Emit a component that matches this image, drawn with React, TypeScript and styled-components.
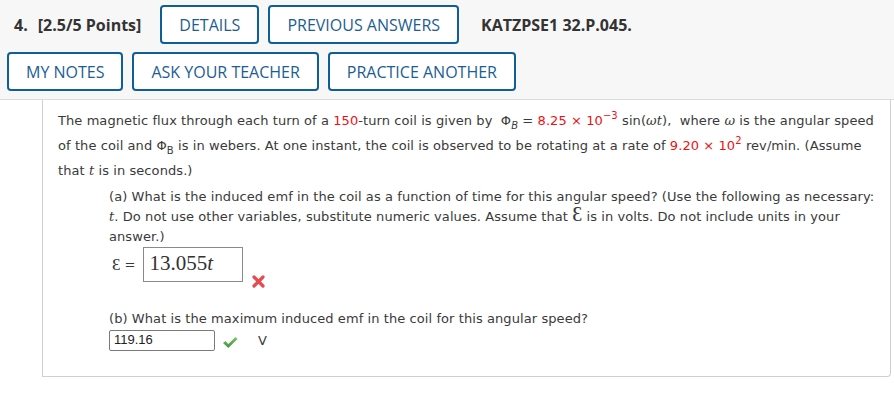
import React from "react";
import styled, { createGlobalStyle } from "styled-components";

const Global = createGlobalStyle`
  html, body { margin: 0; padding: 0; background: #ffffff; }
  body { width: 894px; height: 420px; overflow: hidden; }
`;

const Page = styled.div`
  width: 894px;
  height: 420px;
  background: #ffffff;
`;

const Header = styled.header`
  background: #f7f7f7;
  border-bottom: 1px solid #dcdcdc;
  padding: 5px 0 8px 0;
  display: flex;
  flex-direction: column;
  gap: 8px;
  font-family: "Open Sans", sans-serif;
`;

const Row = styled.div<{ $indent: number }>`
  display: flex;
  align-items: center;
  gap: 9px;
  padding-left: ${(p) => p.$indent}px;
`;

const Num = styled.span`
  font-size: 16px;
  font-weight: 700;
  color: #333333;
  margin-right: 1px;
`;

const Points = styled.span`
  font-size: 16px;
  font-weight: 700;
  color: #333333;
  margin-right: 10px;
`;

const Btn = styled.button`
  box-sizing: border-box;
  height: 39px;
  padding: 0 17px;
  border: 2px solid #0e5f99;
  border-radius: 4px;
  background: #ffffff;
  color: #1b5d94;
  font-family: "Open Sans", sans-serif;
  font-size: 16px;
  font-weight: 500;
  text-transform: uppercase;
  cursor: pointer;
`;

const Code = styled.span`
  margin-left: 13px;
  font-size: 16px;
  font-weight: 700;
  color: #333333;
`;

const Panel = styled.section`
  box-sizing: border-box;
  margin-left: 42px;
  width: 849px;
  height: 277px;
  border: 1px solid #cfcfcf;
  border-top: none;
  border-bottom-right-radius: 4px;
  padding: 8px 0 0 15px;
  font-family: "DejaVu Sans", Verdana, sans-serif;
  font-size: 13px;
  letter-spacing: 0.08px;
  color: #3a3a3a;
`;

const Lead = styled.p`
  margin: 0;
  line-height: 25px;
  width: 822px;
`;

const Red = styled.span`
  color: #ee1111;
`;

const Sup = styled.sup`
  font-size: 10px;
  line-height: 0;
  vertical-align: 6px;
`;

const Sub = styled.sub<{ $italic?: boolean }>`
  font-size: 10px;
  line-height: 0;
  vertical-align: -4px;
  font-style: ${(p) => (p.$italic ? "italic" : "normal")};
`;

const I = styled.i`
  font-family: "DejaVu Serif", serif;
  font-style: italic;
`;

const Part = styled.div`
  margin-left: 51px;
  margin-top: 4px;
  width: 768px;
`;

const PartText = styled.p`
  margin: 0;
  line-height: 20px;
`;

const Script = styled.span<{ $size: number }>`
  font-family: "Liberation Serif", "DejaVu Serif", serif;
  font-size: ${(p) => p.$size}px;
  line-height: 0;
`;

const EqRow = styled.div`
  display: flex;
  align-items: flex-start;
  margin-top: 0px;
`;

const EqLabel = styled.span`
  display: flex;
  align-items: center;
  height: 35px;
  margin-left: 3px;
  margin-right: 7px;
  gap: 4px;
`;

const MathBox = styled.div`
  box-sizing: border-box;
  width: 100px;
  height: 35px;
  border: 1px solid #8a8a8a;
  padding: 3px 0 0 6px;
  font-family: "Liberation Serif", serif;
  font-size: 21px;
  letter-spacing: 0;
  color: #333333;
  background: #ffffff;
`;

const Mark = styled.span<{ $top: number; $left: number }>`
  display: inline-flex;
  margin-left: ${(p) => p.$left}px;
  margin-top: ${(p) => p.$top}px;
`;

const PartB = styled.div`
  margin-left: 51px;
  margin-top: 21px;
`;

const AnsRow = styled.div`
  display: flex;
  align-items: center;
  margin-top: 1px;
`;

const TextBox = styled.div`
  box-sizing: border-box;
  width: 106px;
  height: 21px;
  border: 1px solid #7a7a7a;
  border-radius: 2px;
  padding: 1px 0 0 4px;
  font-family: "Liberation Sans", Arial, sans-serif;
  font-size: 13px;
  letter-spacing: 0;
  color: #222222;
`;

const Unit = styled.span`
  margin-left: 20px;
  font-size: 13px;
  color: #3a3a3a;
`;

const Cross = () => (
  <svg width="13" height="13" viewBox="0 0 13 13">
    <path d="M2 2 L11 11 M11 2 L2 11" stroke="#e84a50" strokeWidth="3.2" strokeLinecap="round" />
  </svg>
);

const Check = () => (
  <svg width="16" height="13" viewBox="0 0 16 13">
    <defs>
      <linearGradient id="g" x1="0" y1="0" x2="0" y2="1">
        <stop offset="0" stopColor="#7cc36a" />
        <stop offset="1" stopColor="#3f9440" />
      </linearGradient>
    </defs>
    <path d="M1 7 L3.5 5 L6.3 8 L13.5 1 L15.5 3 L6.3 12 Z" fill="url(#g)" />
  </svg>
);

export default function App() {
  return (
    <Page>
      <Global />
      <Header>
        <Row $indent={14}>
          <Num>4.</Num>
          <Points>[2.5/5 Points]</Points>
          <Btn>Details</Btn>
          <Btn>Previous Answers</Btn>
          <Code>KATZPSE1 32.P.045.</Code>
        </Row>
        <Row $indent={7}>
          <Btn>My Notes</Btn>
          <Btn>Ask Your Teacher</Btn>
          <Btn>Practice Another</Btn>
        </Row>
      </Header>
      <Panel>
        <Lead>
          The magnetic flux through each turn of a <Red>150</Red>-turn coil is given by&nbsp;{" "}
          Φ<Sub $italic>B</Sub> = <Red>8.25 × 10<Sup>−3</Sup></Red> sin(<I>ωt</I>),&nbsp; where{" "}
          <I>ω</I> is the angular speed of the coil and Φ<Sub>B</Sub> is in webers. At one instant,
          the coil is observed to be rotating at a rate of <Red>9.20 × 10<Sup>2</Sup></Red>{" "}
          rev/min. (Assume that <I>t</I> is in seconds.)
        </Lead>
        <Part>
          <PartText>
            (a) What is the induced emf in the coil as a function of time for this angular speed?
            (Use the following as necessary: <I>t</I>. Do not use other variables, substitute
            numeric values. Assume that <Script $size={20}>Ɛ</Script> is in volts. Do not include
            units in your answer.)
          </PartText>
          <EqRow>
            <EqLabel>
              <Script $size={17}>Ɛ</Script>=
            </EqLabel>
            <MathBox>
              13.055<i>t</i>
            </MathBox>
            <Mark $top={28} $left={9}>
              <Cross />
            </Mark>
          </EqRow>
        </Part>
        <PartB>
          <PartText>(b) What is the maximum induced emf in the coil for this angular speed?</PartText>
          <AnsRow>
            <TextBox>119.16</TextBox>
            <Mark $top={4} $left={7}>
              <Check />
            </Mark>
            <Unit>V</Unit>
          </AnsRow>
        </PartB>
      </Panel>
    </Page>
  );
}
